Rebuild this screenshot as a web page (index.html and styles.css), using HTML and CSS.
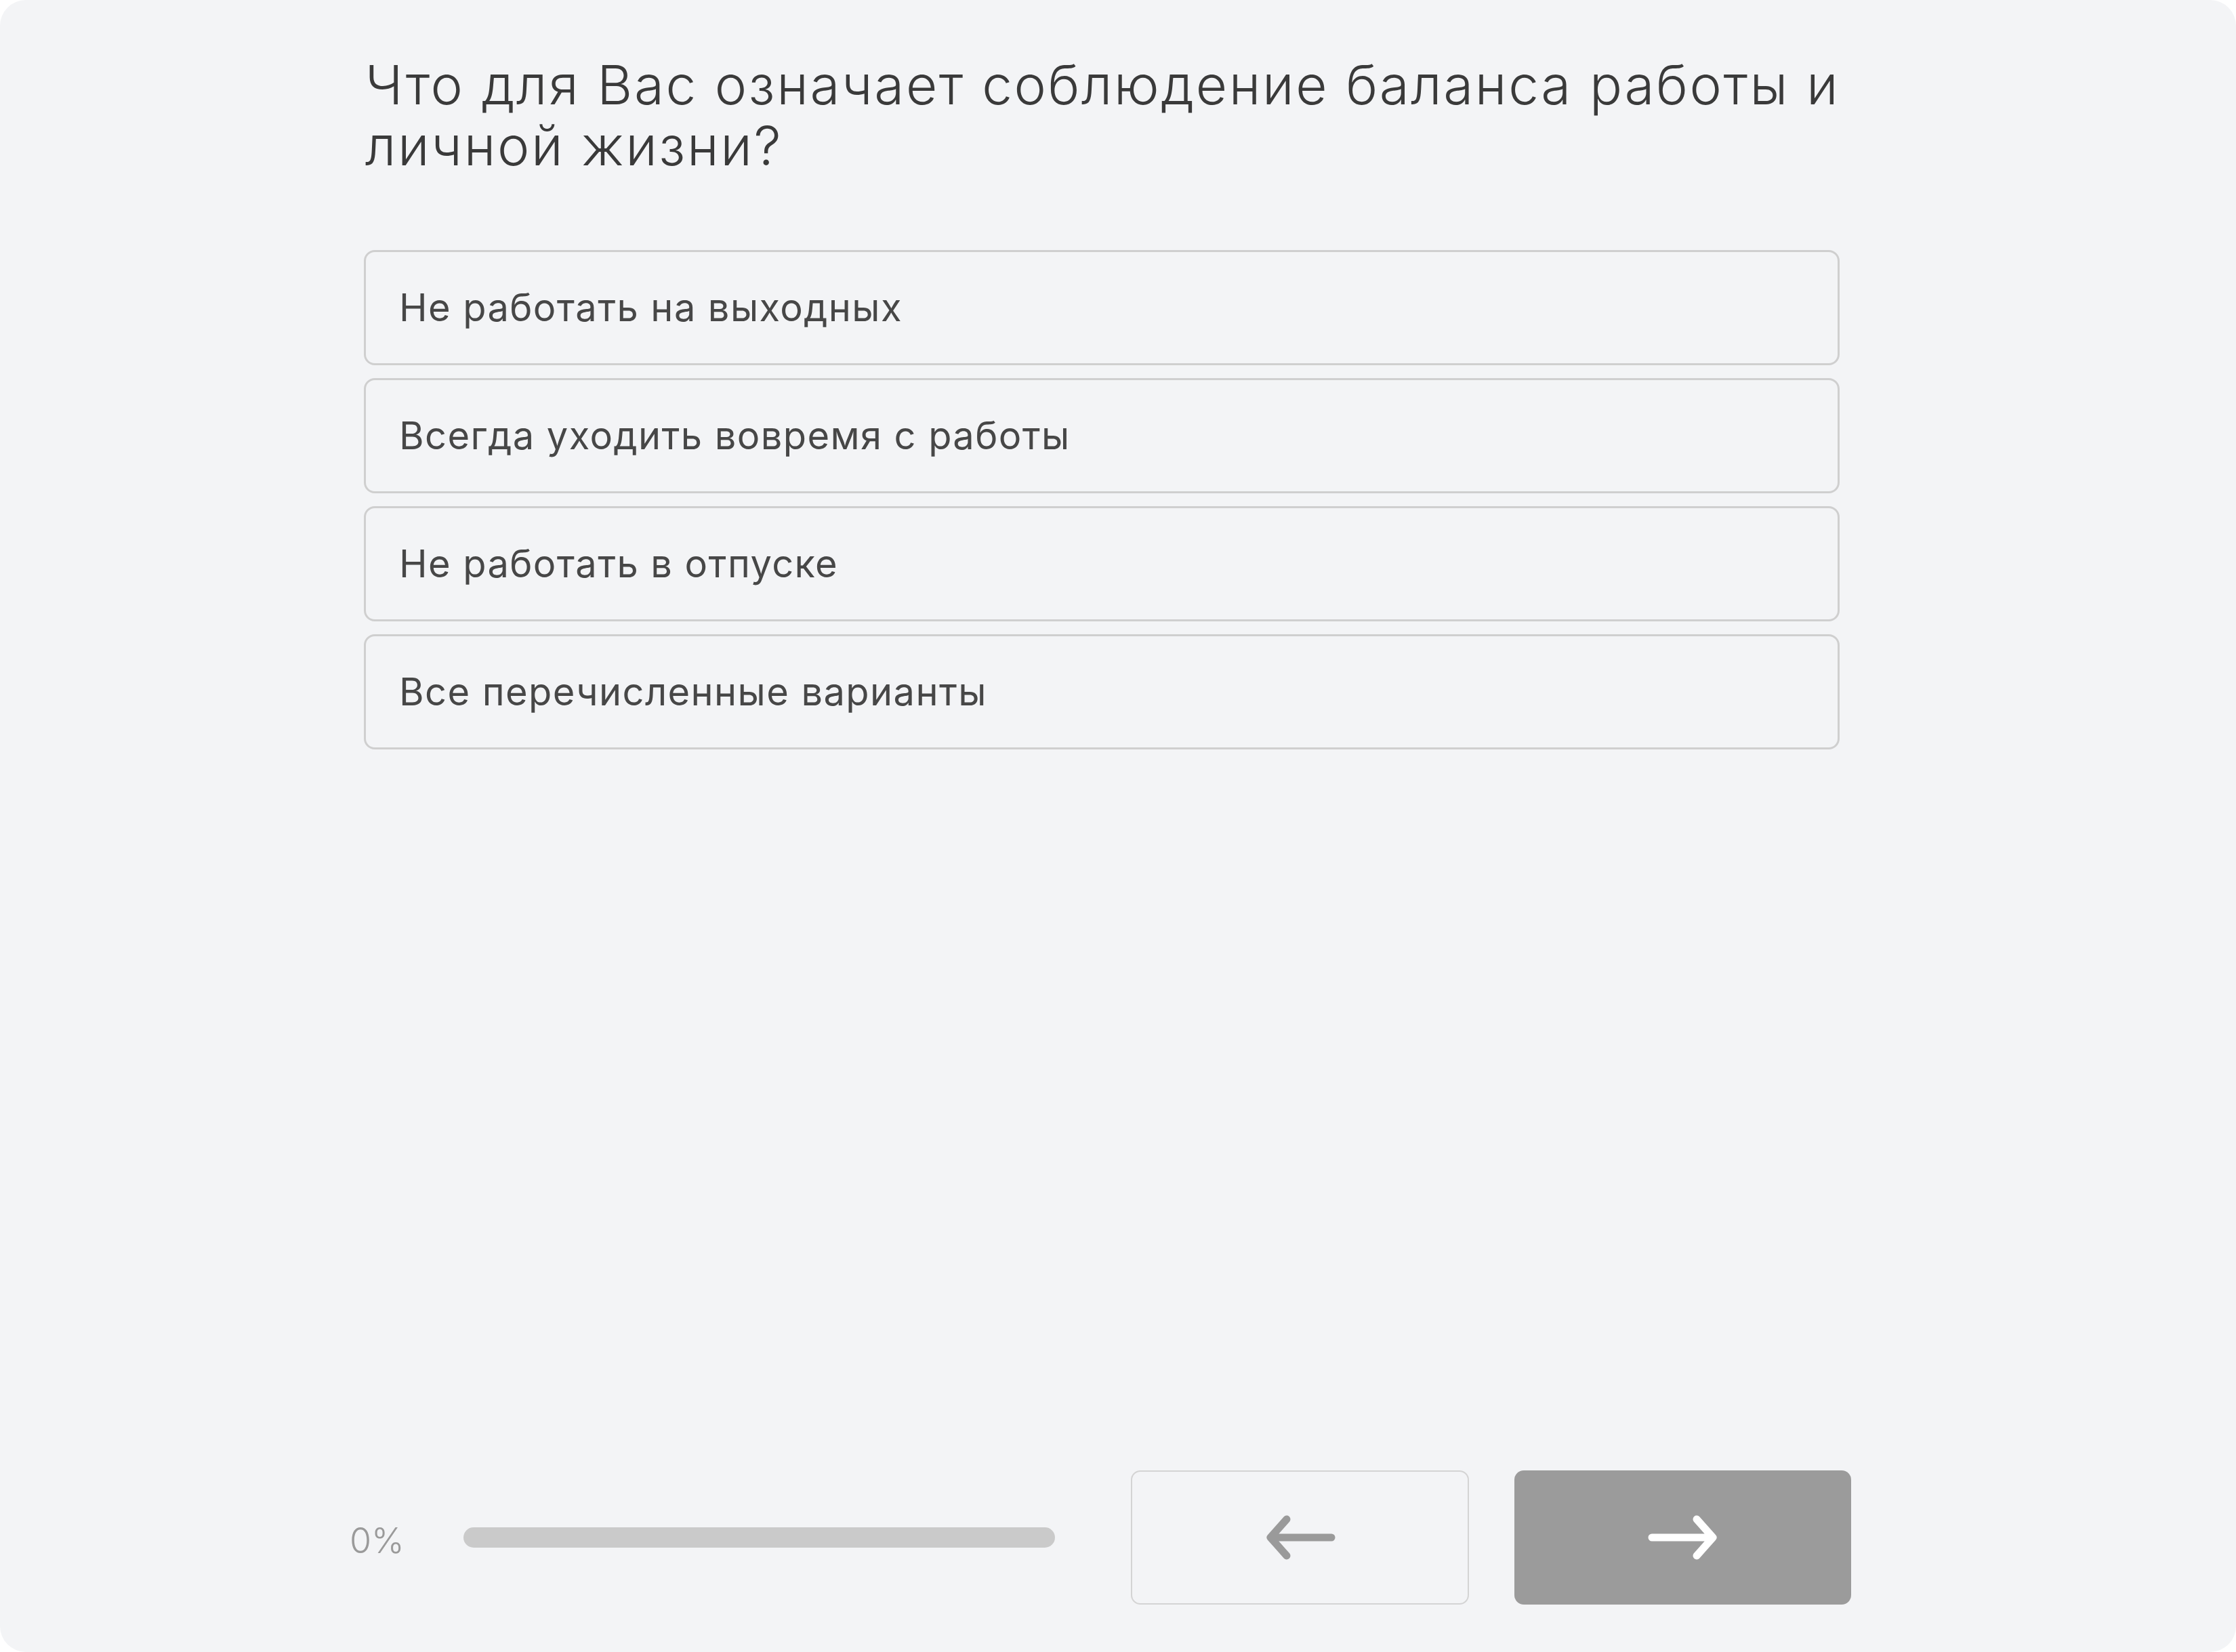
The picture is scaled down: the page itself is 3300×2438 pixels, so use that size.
FILE: index.html
```html
<!DOCTYPE html>
<html lang="ru">
<head>
<meta charset="utf-8">
<title>Опрос</title>
<link rel="stylesheet" href="styles.css">
</head>
<body>
<div class="screen">
  <main class="main">
    <h1 class="question">Что для Вас означает соблюдение баланса работы и личной жизни?</h1>
    <ul class="options">
      <li class="option">Не работать на выходных</li>
      <li class="option">Всегда уходить вовремя с работы</li>
      <li class="option">Не работать в отпуске</li>
      <li class="option">Все перечисленные варианты</li>
    </ul>
  </main>
  <footer class="footer">
    <span class="percent">0%</span>
    <div class="progress"><div class="progress-fill" style="width:0%"></div></div>
    <button class="nav nav-back" type="button" aria-label="Назад">
      <svg class="arrow" viewBox="0 0 104 66" width="104" height="66"><path d="M98 33H10M32 6L8 33L32 60" fill="none" stroke="#9a9a9a" stroke-width="11" stroke-linecap="round" stroke-linejoin="round"/></svg>
    </button>
    <button class="nav nav-next" type="button" aria-label="Далее">
      <svg class="arrow" viewBox="0 0 104 66" width="104" height="66"><path d="M6 33H94M72 6L96 33L72 60" fill="none" stroke="#ffffff" stroke-width="11" stroke-linecap="round" stroke-linejoin="round"/></svg>
    </button>
  </footer>
</div>
</body>
</html>
```

FILE: styles.css
```css
html, body {
  margin: 0;
  padding: 0;
  background: #ffffff;
}
.screen {
  width: 3300px;
  height: 2438px;
  background: #f3f4f6;
  border-radius: 38px;
  display: flex;
  flex-direction: column;
  font-family: Inter, "Noto Sans", sans-serif;
  color: #3f3f3f;
  box-sizing: border-box;
}
.main {
  flex: 1;
  padding-left: 537px;
  width: 2178px;
}
.question {
  margin: 80px -60px 0 2px;
  font-size: 80px;
  line-height: 90px;
  font-weight: 300;
  color: #3a3a3a;
  letter-spacing: 2.6px;
}
.options {
  list-style: none;
  margin: 109px 0 0 0;
  padding: 0;
  display: flex;
  flex-direction: column;
  gap: 19px;
}
.option {
  height: 170px;
  box-sizing: border-box;
  border: 3px solid #cfcfcf;
  border-radius: 16px;
  display: flex;
  align-items: center;
  padding-left: 49px;
  font-size: 56px;
  font-weight: 400;
  color: #474747;
  letter-spacing: 1.4px;
}
.footer {
  display: flex;
  align-items: center;
  padding-left: 516px;
  margin-bottom: 70px;
  height: 198px;
}
.percent {
  width: 80px;
  font-size: 52px;
  font-weight: 300;
  color: #9a9a9a;
  margin-top: 8px;
}
.progress {
  margin-left: 88px;
  width: 873px;
  height: 30px;
  border-radius: 15px;
  background: #cacaca;
  overflow: hidden;
}
.progress-fill {
  height: 100%;
  background: #9a9a9a;
}
.nav {
  box-sizing: border-box;
  height: 198px;
  width: 499px;
  border-radius: 14px;
  display: flex;
  align-items: center;
  justify-content: center;
  padding: 0;
  cursor: pointer;
}
.nav-back {
  margin-left: 112px;
  background: #f3f4f6;
  border: 2px solid #d4d4d4;
}
.nav-next {
  margin-left: 67px;
  background: #9b9b9b;
  border: none;
  width: 497px;
}
.arrow {
  display: block;
}
```
